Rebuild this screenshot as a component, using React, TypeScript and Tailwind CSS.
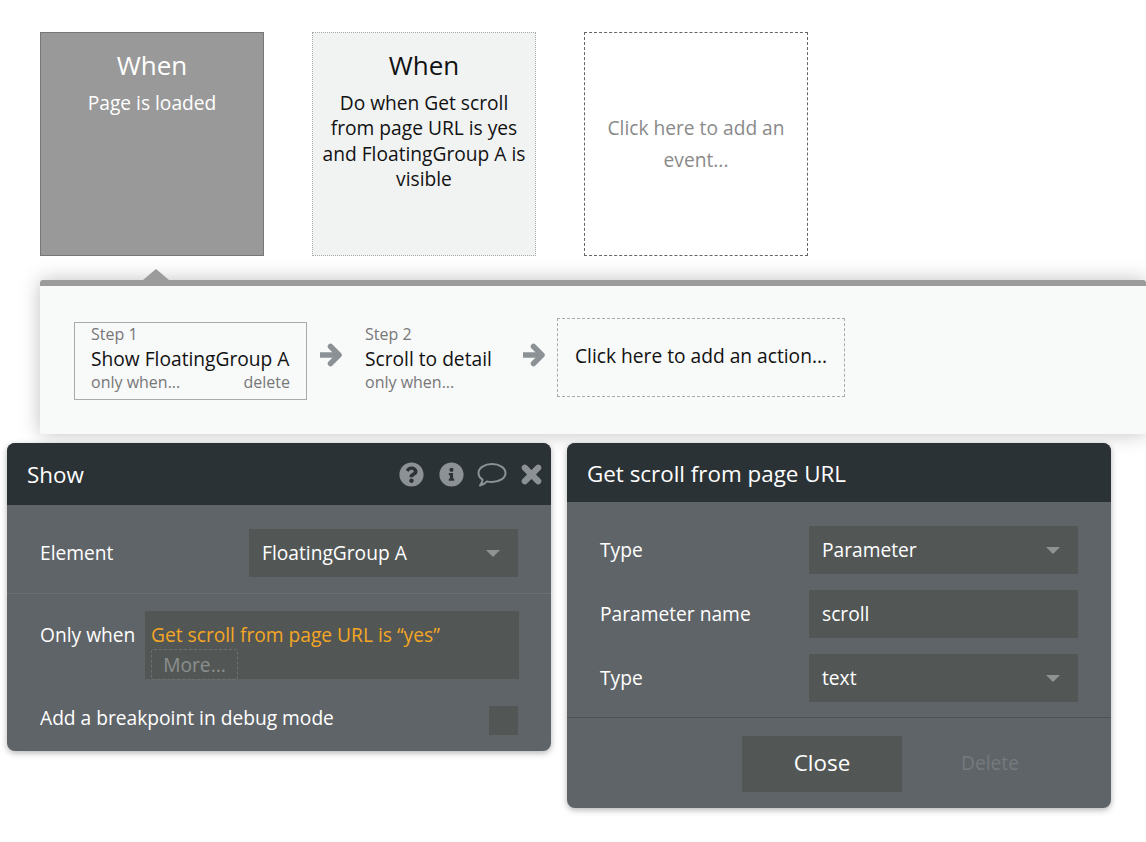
import { FaInfoCircle, FaQuestionCircle } from 'react-icons/fa';

function EventCard({ title, text, active }: { title: string; text: string; active?: boolean }) {
    return (
        <div className={`w-[224px] h-[224px] px-[8px] pt-[14px] text-center border ${active ? 'bg-[#999999] border-[#777777] text-white' : 'bg-[#f1f3f3] border-dotted border-[#aaaaaa] text-[#111111]'}`}>
            <div className="text-[26px] leading-[36px]">{title}</div>
            <div className="mt-[7px] text-[19.2px] leading-[25.4px]">{text}</div>
        </div>
    );
}

function Arrow() {
    return (
        <svg viewBox="0 0 24 24" className="w-[24px] h-[24px] shrink-0" fill="none" stroke="#8b9194" strokeWidth="5.5">
            <path d="M1 12H19" />
            <path d="M11.5 3.5L20 12L11.5 20.5" strokeLinecap="round" strokeLinejoin="round" />
        </svg>
    );
}

function Select({ value }: { value: string }) {
    return (
        <div className="w-[269px] h-[48px] bg-[#525756] flex items-center justify-between pl-[13px] pr-[18px] text-[19.2px] text-white">
            <span>{value}</span>
            <span className="w-0 h-0 border-l-[7px] border-r-[7px] border-t-[7px] border-l-transparent border-r-transparent border-t-[#8f9392]"></span>
        </div>
    );
}

export default function App() {
    return (
        <div className="w-[1146px] h-[842px] overflow-hidden bg-white pt-[32px] font-['Open_Sans',sans-serif]">
            <div className="flex gap-[48px] pl-[40px]">
                <EventCard title="When" text="Page is loaded" active />
                <EventCard title="When" text="Do when Get scroll from page URL is yes and FloatingGroup A is visible" />
                <div className="w-[224px] h-[224px] border border-dashed border-[#666666] flex items-center justify-center text-center px-[14px] text-[19.2px] leading-[32px] text-[#8a8a8a]">
                    Click here to add an event...
                </div>
            </div>

            <div className="relative mt-[24px] ml-[40px] h-[154px] bg-[#f8f9f9] border-t-[6px] border-[#9b9b9b] rounded-[3px] shadow-[0_0_20px_rgba(0,0,0,0.25)] flex items-start pt-[32px] pl-[34px]">
                <span className="absolute left-[103px] top-[-17px] w-0 h-0 border-l-[13px] border-r-[13px] border-b-[11px] border-l-transparent border-r-transparent border-b-[#9b9b9b]"></span>
                <div className="mt-[4px] w-[233px] h-[78px] border border-[#aaaaaa] pl-[16px] pr-[16px] flex flex-col">
                    <div className="text-[16px] leading-[22px] text-[#777777]">Step 1</div>
                    <div className="text-[19.2px] leading-[27px] text-[#111111] whitespace-nowrap">Show FloatingGroup A</div>
                    <div className="flex justify-between text-[16px] leading-[20px] text-[#777777]">
                        <span>only when...</span>
                        <span>delete</span>
                    </div>
                </div>
                <div className="mt-[25px] ml-[12px]"><Arrow /></div>
                <div className="mt-[5px] ml-[22px] w-[157px] flex flex-col">
                    <div className="text-[16px] leading-[22px] text-[#777777]">Step 2</div>
                    <div className="text-[19.2px] leading-[27px] text-[#111111] whitespace-nowrap">Scroll to detail</div>
                    <div className="text-[16px] leading-[20px] text-[#777777]">only when...</div>
                </div>
                <div className="mt-[25px]"><Arrow /></div>
                <div className="ml-[11px] w-[288px] h-[79px] border border-dashed border-[#aaaaaa] flex items-center pl-[17px] pb-[2px] text-[19.2px] text-[#111111] whitespace-nowrap">
                    Click here to add an action...
                </div>
            </div>

            <div className="relative mt-[9px] ml-[7px] flex items-start gap-[16px]">
                <div className="w-[544px] h-[308px] rounded-[8px] overflow-hidden bg-[#5f6468] shadow-[0_2px_6px_rgba(0,0,0,0.3)]">
                    <div className="h-[62px] bg-[#2b3235] flex items-center justify-between pl-[20px] pr-[9px] text-white text-[22.4px]">
                        <span className="pt-[2px]">Show</span>
                        <div className="flex items-center text-[#8b9194]">
                            <FaQuestionCircle className="w-[25px] h-[25px]" />
                            <FaInfoCircle className="ml-[15px] w-[25px] h-[25px]" />
                            <svg viewBox="0 0 30 25" className="ml-[13px] w-[30px] h-[25px]" fill="none" stroke="#8b9194" strokeWidth="2">
                                <path d="M15 2C22.5 2 28.5 5.8 28.5 11C28.5 16.2 22.5 20 15 20C13.2 20 11.6 19.8 10 19.4C8.2 21.4 5.6 23 3 23.4C4.4 21.8 5.4 20 5.6 17.6C3 16 1.5 13.7 1.5 11C1.5 5.8 7.5 2 15 2Z" strokeLinejoin="round" />
                            </svg>
                            <svg viewBox="0 0 22 22" className="ml-[14px] w-[21px] h-[21px]" fill="none" stroke="#8b9194" strokeWidth="6.5" strokeLinecap="round">
                                <path d="M4 4L18 18M18 4L4 18" />
                            </svg>
                        </div>
                    </div>
                    <div className="h-[89px] border-b border-dotted border-[#777b7e] pl-[33px] pr-[33px] pt-[24px] flex justify-between items-start">
                        <span className="text-[19.2px] leading-[48px] text-white">Element</span>
                        <Select value="FloatingGroup A" />
                    </div>
                    <div className="mt-[17px] pl-[33px] pr-[32px] flex justify-between items-start">
                        <span className="text-[19.2px] leading-[48px] text-white whitespace-nowrap">Only when</span>
                        <div className="w-[374px] h-[68px] bg-[#525756] pl-[6px] pt-[8px]">
                            <div className="text-[19.2px] leading-[32px] text-[#f5a623]">Get scroll from page URL is “yes”</div>
                            <div className="w-[87px] h-[31px] -mt-[2px] border border-dashed border-[#6c7170] rounded-[3px] text-center text-[19.2px] leading-[29px] text-[#8b8f8e]">More...</div>
                        </div>
                    </div>
                    <div className="mt-[27px] pl-[33px] pr-[33px] flex justify-between items-start">
                        <span className="text-[19.2px] leading-[24px] text-white">Add a breakpoint in debug mode</span>
                        <span className="w-[29px] h-[29px] bg-[#525756]"></span>
                    </div>
                </div>

                <div className="w-[544px] h-[365px] rounded-[8px] overflow-hidden bg-[#5f6468] shadow-[0_2px_6px_rgba(0,0,0,0.3)]">
                    <div className="h-[59px] pt-[2px] bg-[#2b3235] flex items-center pl-[20px] text-white text-[22.4px]">Get scroll from page URL</div>
                    <div className="h-[216px] border-b border-[#4d5254] pt-[24px] pl-[33px] pr-[33px] flex flex-col gap-[16px]">
                        <div className="flex justify-between items-center">
                            <span className="text-[19.2px] text-white">Type</span>
                            <Select value="Parameter" />
                        </div>
                        <div className="flex justify-between items-center">
                            <span className="text-[19.2px] text-white">Parameter name</span>
                            <div className="w-[269px] h-[48px] bg-[#525756] flex items-center pl-[13px] text-[19.2px] text-white">scroll</div>
                        </div>
                        <div className="flex justify-between items-center">
                            <span className="text-[19.2px] text-white">Type</span>
                            <Select value="text" />
                        </div>
                    </div>
                    <div className="mt-[18px] pl-[175px] flex items-center">
                        <div className="w-[160px] h-[56px] pb-[3px] bg-[#525756] flex items-center justify-center text-[22.4px] text-white">Close</div>
                        <div className="ml-[59px] pb-[2px] text-[19.2px] text-[#757a7c]">Delete</div>
                    </div>
                </div>
            </div>
        </div>
    );
}
